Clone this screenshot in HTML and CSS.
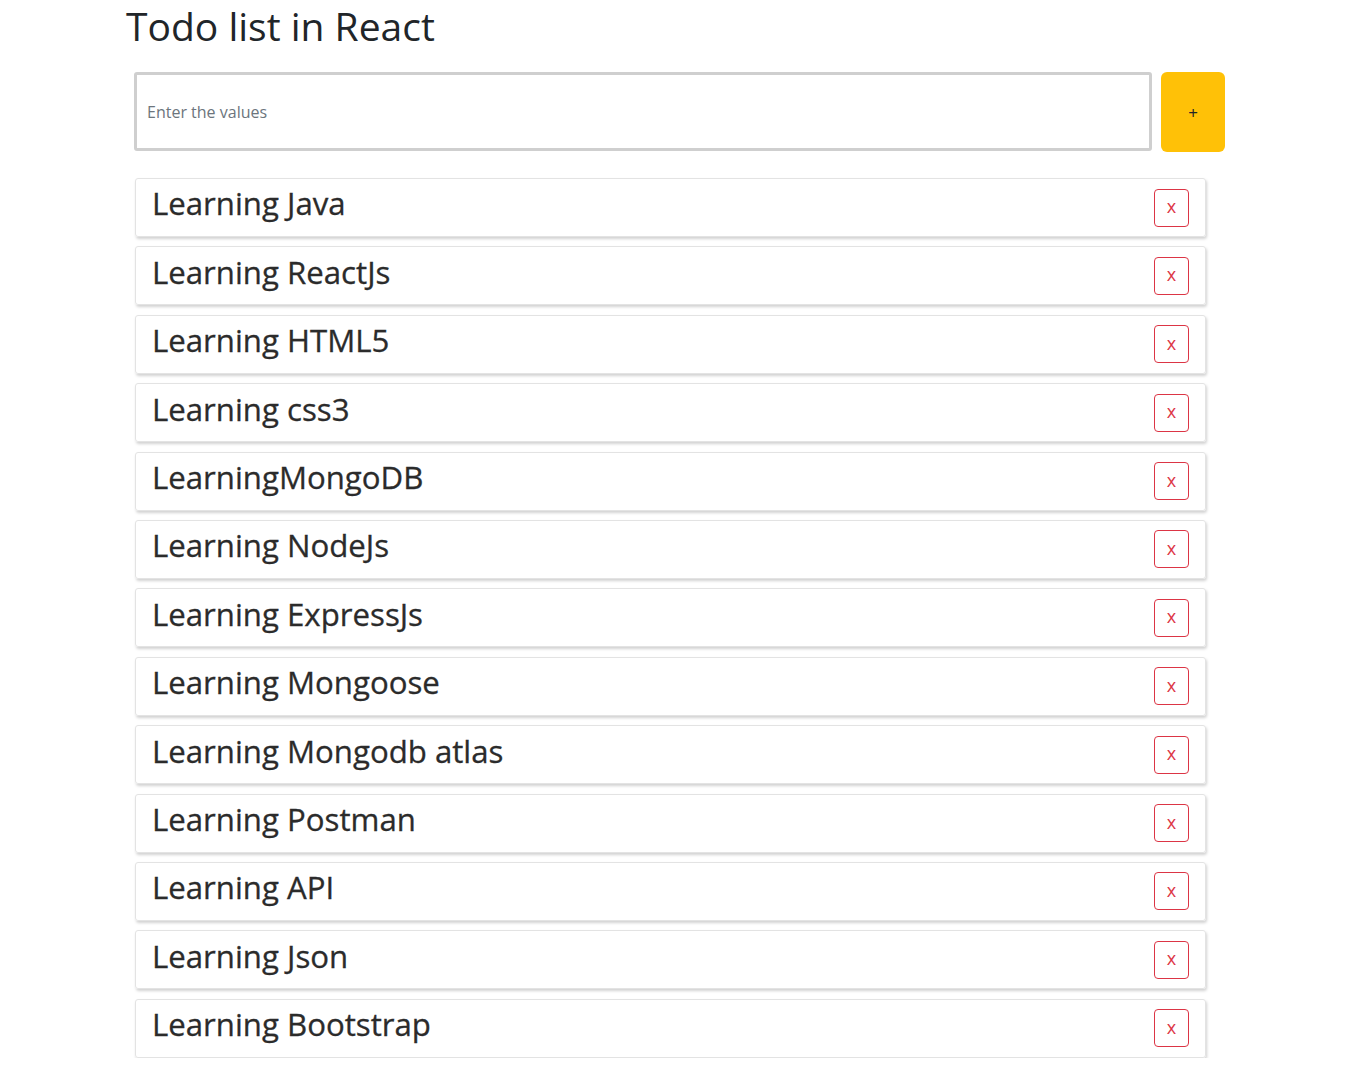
FILE: index.html
```html
<!DOCTYPE html>
<html>
<head>
<meta charset="utf-8">
<link rel="stylesheet" href="styles.css">
</head>
<body>
<div class="app">
  <h1 class="title">Todo list in React</h1>
  <div class="add-row">
    <input class="todo-input" type="text" placeholder="Enter the values">
    <button class="add-btn">+</button>
  </div>
  <ul class="todo-list">
    <li class="todo-item"><span class="todo-text">Learning Java</span><button class="del-btn">x</button></li>
    <li class="todo-item"><span class="todo-text">Learning ReactJs</span><button class="del-btn">x</button></li>
    <li class="todo-item"><span class="todo-text">Learning HTML5</span><button class="del-btn">x</button></li>
    <li class="todo-item"><span class="todo-text">Learning css3</span><button class="del-btn">x</button></li>
    <li class="todo-item"><span class="todo-text">LearningMongoDB</span><button class="del-btn">x</button></li>
    <li class="todo-item"><span class="todo-text">Learning NodeJs</span><button class="del-btn">x</button></li>
    <li class="todo-item"><span class="todo-text">Learning ExpressJs</span><button class="del-btn">x</button></li>
    <li class="todo-item"><span class="todo-text">Learning Mongoose</span><button class="del-btn">x</button></li>
    <li class="todo-item"><span class="todo-text">Learning Mongodb atlas</span><button class="del-btn">x</button></li>
    <li class="todo-item"><span class="todo-text">Learning Postman</span><button class="del-btn">x</button></li>
    <li class="todo-item"><span class="todo-text">Learning API</span><button class="del-btn">x</button></li>
    <li class="todo-item"><span class="todo-text">Learning Json</span><button class="del-btn">x</button></li>
    <li class="todo-item"><span class="todo-text">Learning Bootstrap</span><button class="del-btn">x</button></li>
  </ul>
</div>
</body>
</html>
```
FILE: styles.css
```css
* { box-sizing: border-box; }
html, body { margin: 0; padding: 0; background: #fff; }
body {
  font-family: "Open Sans", "Noto Sans", sans-serif;
  color: #212529;
}
.app {
  width: 1366px;
  padding: 0 141px 0 126px;
}
.title {
  margin: 0;
  padding-top: 4px;
  font-size: 39px;
  font-weight: 500;
  line-height: 44px;
  color: #212529;
}
.add-row {
  display: flex;
  gap: 9px;
  margin-top: 24px;
  padding-left: 8px;
}
.todo-input {
  width: 1018px;
  height: 79px;
  border: 3px solid #cfcfcf;
  border-radius: 3px;
  padding: 0 10px;
  font-family: inherit;
  font-size: 16px;
  color: #495057;
  outline: none;
}
.todo-input::placeholder { color: #6c757d; }
.add-btn {
  width: 64px;
  height: 80px;
  border: none;
  border-radius: 6px;
  background: #ffc107;
  color: #212529;
  font-size: 17px;
  font-family: inherit;
  padding: 0;
}
.todo-list {
  list-style: none;
  margin: 26px 0 0 9px;
  padding: 0;
  width: 1071px;
  display: flex;
  flex-direction: column;
  gap: 9.4px;
}
.todo-item {
  height: 59px;
  display: flex;
  align-items: center;
  justify-content: space-between;
  padding: 0 16px 0 16px;
  border: 1px solid #e3e3e3;
  border-radius: 3px;
  box-shadow: 1px 2px 3px rgba(0,0,0,0.18);
}
.todo-text {
  font-size: 31.2px;
  font-weight: 500;
  color: #2b2b2b;
  line-height: 1;
  margin-top: -7px;
  -webkit-text-stroke: 0.3px #2b2b2b;
}
.del-btn {
  width: 35px;
  height: 38px;
  border: 1px solid #dc3545;
  border-radius: 4px;
  background: #fff;
  color: #dc3545;
  font-size: 18px;
  font-family: inherit;
  padding: 0 0 3px 0;
}
```
